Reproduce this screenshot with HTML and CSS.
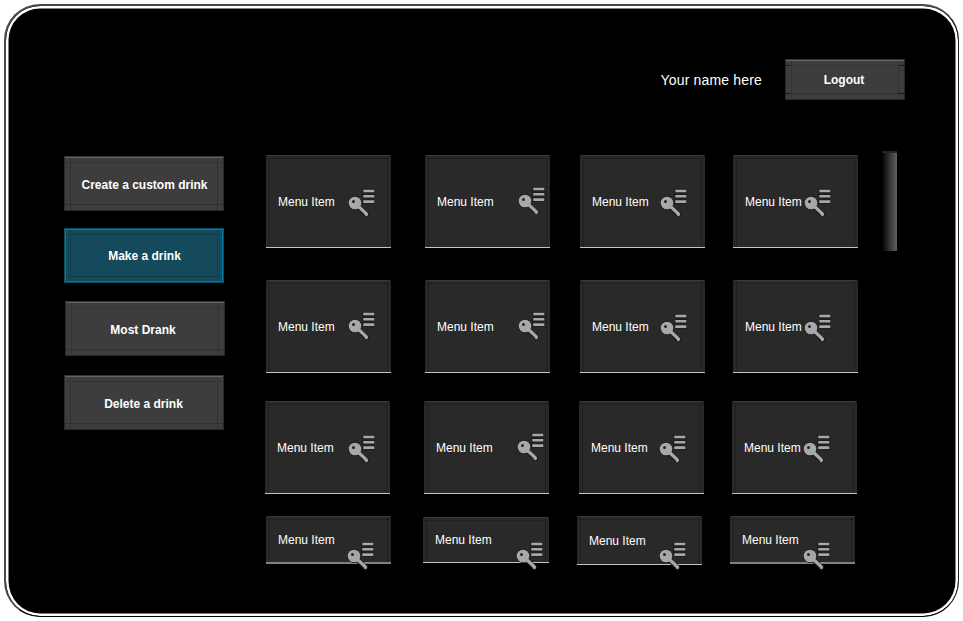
FILE: index.html
```
<!DOCTYPE html>
<html lang="en">
<head>
<meta charset="utf-8">
<title>Drinks</title>
<link rel="stylesheet" href="styles.css">
</head>
<body>
<svg class="defs" width="0" height="0" aria-hidden="true">
  <symbol id="key" viewBox="0 0 28 29">
    <g fill="none" stroke="#1b1b1b">
      <circle cx="7" cy="14" r="6.6"/>
      <path stroke-width="5" stroke-linecap="round" d="M10 17.5l8.6 7.8"/>
      <path stroke-width="4.4" d="M14.2 2h12.6M14.2 7.3h12.6M14.2 12.6h12.6"/>
    </g>
    <g fill="none" stroke="#a8a8a8">
      <circle cx="7" cy="14" r="6.3" fill="#a8a8a8" stroke="none"/>
      <path stroke-width="3.2" stroke-linecap="round" stroke-linejoin="round" d="M10 17l4.6 4.2 3.8 3.8v.6"/>
      <path stroke-width="2.6" d="M15.3 2h11M15.3 7.3h11M15.3 12.6h11"/>
    </g>
    <circle cx="5.5" cy="12.4" r="1.5" fill="#242424"/>
  </symbol>
</svg>
<div class="frame">
  <header class="top">
    <span class="user">Your name here</span>
    <button class="btn logout"><span>Logout</span></button>
  </header>
  <main class="content">
    <nav class="side">
      <button class="btn create"><span>Create a custom drink</span></button>
      <button class="btn make active"><span>Make a drink</span></button>
      <button class="btn most"><span>Most Drank</span></button>
      <button class="btn delete"><span>Delete a drink</span></button>
    </nav>
    <section class="menu">
      <div class="row r1">
        <div class="card a"><span>Menu Item</span><svg><use href="#key"/></svg></div>
        <div class="card b"><span>Menu Item</span><svg><use href="#key"/></svg></div>
        <div class="card c"><span>Menu Item</span><svg><use href="#key"/></svg></div>
        <div class="card d"><span>Menu Item</span><svg><use href="#key"/></svg></div>
      </div>
      <div class="row r2">
        <div class="card a"><span>Menu Item</span><svg><use href="#key"/></svg></div>
        <div class="card b"><span>Menu Item</span><svg><use href="#key"/></svg></div>
        <div class="card c"><span>Menu Item</span><svg><use href="#key"/></svg></div>
        <div class="card d"><span>Menu Item</span><svg><use href="#key"/></svg></div>
      </div>
      <div class="row r3">
        <div class="card a"><span>Menu Item</span><svg><use href="#key"/></svg></div>
        <div class="card b"><span>Menu Item</span><svg><use href="#key"/></svg></div>
        <div class="card c"><span>Menu Item</span><svg><use href="#key"/></svg></div>
        <div class="card d"><span>Menu Item</span><svg><use href="#key"/></svg></div>
      </div>
      <div class="row r4">
        <div class="card a"><span>Menu Item</span><svg><use href="#key"/></svg></div>
        <div class="card b"><span>Menu Item</span><svg><use href="#key"/></svg></div>
        <div class="card c"><span>Menu Item</span><svg><use href="#key"/></svg></div>
        <div class="card d"><span>Menu Item</span><svg><use href="#key"/></svg></div>
      </div>
    </section>
    <div class="scroll"></div>
  </main>
</div>
</body>
</html>
```
FILE: styles.css
```
*, *::before, *::after { box-sizing: border-box; }
html, body { margin: 0; height: 621px; overflow: hidden; background: #fff; }
body { padding: 4px 0 0 4px; font-family: "Liberation Sans", Arial, sans-serif; color: #fff; }
.defs { position: absolute; }

.frame {
  width: 955px; height: 613px;
  border: solid #000; border-width: 2px 1px 1px 2px;
  border-color: #484848 #222 #000 #484848; border-radius: 36px;
  background: #000;
  box-shadow: inset 0 0 0 2.5px #fff;
  padding: 53px 53px 0 58px;
}

.top { display: flex; justify-content: flex-end; align-items: flex-start; height: 96px; }
.user { font-size: 14px; line-height: 16px; margin: 13px 23px 0 0; letter-spacing: .17px; white-space: nowrap; }

.btn {
  position: relative; display: block; width: 160px; height: 55px; padding: 0;
  border: 1px solid #292929; border-top-color: #333;
  color: #fff; font: bold 12px/15px "Liberation Sans", Arial, sans-serif; white-space: nowrap;
  background:
    linear-gradient(#666, #666) 0 0 / 100% 1px no-repeat,
    linear-gradient(#343434, #343434) 0 5px / 100% 1px no-repeat,
    linear-gradient(#303030, #303030) 0 calc(100% - 5px) / 100% 1px no-repeat,
    linear-gradient(#343434, #343434) 5px 0 / 1px 100% no-repeat,
    linear-gradient(#343434, #343434) calc(100% - 5px) 0 / 1px 100% no-repeat,
    #3d3d3d;
}
.btn span { position: relative; top: 1px; }
.logout { width: 120px; height: 41px; }
.logout::before, .logout::after {
  content: ""; position: absolute; top: 5px; width: 6px; height: 29px;
  border: solid #171717; border-width: 1px 0;
}
.logout::before { left: -1px; }
.logout::after { right: -1px; }
.logout span { left: -1px; }

.content { display: flex; align-items: flex-start; }
.side { width: 161px; padding-top: 1px; }
.create span { left: .5px; top: 1.5px; }
.make { margin-top: 17px; }
.make span { left: .5px; }
.most { margin: 18px 0 0 1px; }
.most span { left: -2px; top: 1.5px; }
.delete { margin-top: 19px; }
.delete span { left: -.5px; top: 1.5px; }
.active {
  border: 1px solid #074b65;
  box-shadow: inset 0 0 0 1px #0879a5;
  background:
    linear-gradient(#103b4b, #103b4b) 0 5px / 100% 1px no-repeat,
    linear-gradient(#103b4b, #103b4b) 0 calc(100% - 5px) / 100% 1px no-repeat,
    linear-gradient(#103b4b, #103b4b) 5px 0 / 1px 100% no-repeat,
    linear-gradient(#103b4b, #103b4b) calc(100% - 5px) 0 / 1px 100% no-repeat,
    #15495c;
}

.menu { width: 592px; margin-left: 41px; }
.row { display: grid; grid-template-columns: 159px 155px 153px 125px; align-items: start; }
.r2 { margin-top: 32px; }
.r3 { margin: 28px 0 0 -1px; }
.r4 { margin-top: 22px; grid-template-columns: 157px 154px 153px 125px; }

.card {
  --x: 82px; --y: 34px;
  position: relative; width: 125px; height: 93px; padding: 40px 0 0 12px;
  border-bottom: 1px solid #c4c4c4; border-radius: 2px 2px 0 0;
  background:
    linear-gradient(#3b3b3b, #3b3b3b) 0 0 / 100% 1px no-repeat,
    linear-gradient(#202020, #202020) 0 3px / 100% 1px no-repeat,
    linear-gradient(#1f1f1f, #1f1f1f) 3px 0 / 1px 100% no-repeat,
    linear-gradient(#1f1f1f, #1f1f1f) calc(100% - 3px) 0 / 1px 100% no-repeat,
    #292929;
}
.card span { display: block; font-size: 12px; line-height: 15px; white-space: nowrap; }
.card svg { position: absolute; left: var(--x); top: var(--y); width: 28px; height: 29px; overflow: visible; }
.b { --x: 93px; --y: 32px; }
.c { --x: 80px; }
.d { --x: 71px; }
.r2 .a { --y: 32px; }
.r3 .a { --x: 83px; }
.r4 .card { height: 48px; padding-top: 17px; --y: 26px; }
.r4 .a, .r4 .d { border-bottom: 2px solid #808080; }
.r4 .a { --x: 81px; }
.r4 .card.b { --x: 93px; --y: 25px; width: 126px; height: 46px; margin-top: 1px; padding-top: 16px; }
.r4 .card.c { --x: 82px; height: 49px; padding-top: 18px; }
.r4 .d { --x: 73px; }

.scroll {
  width: 15px; height: 100px; margin: -4px 0 0 24px;
  border-top: 2px solid #252525;
  background: linear-gradient(90deg, #000, #2e2e2e 45%, #606060);
}
```
